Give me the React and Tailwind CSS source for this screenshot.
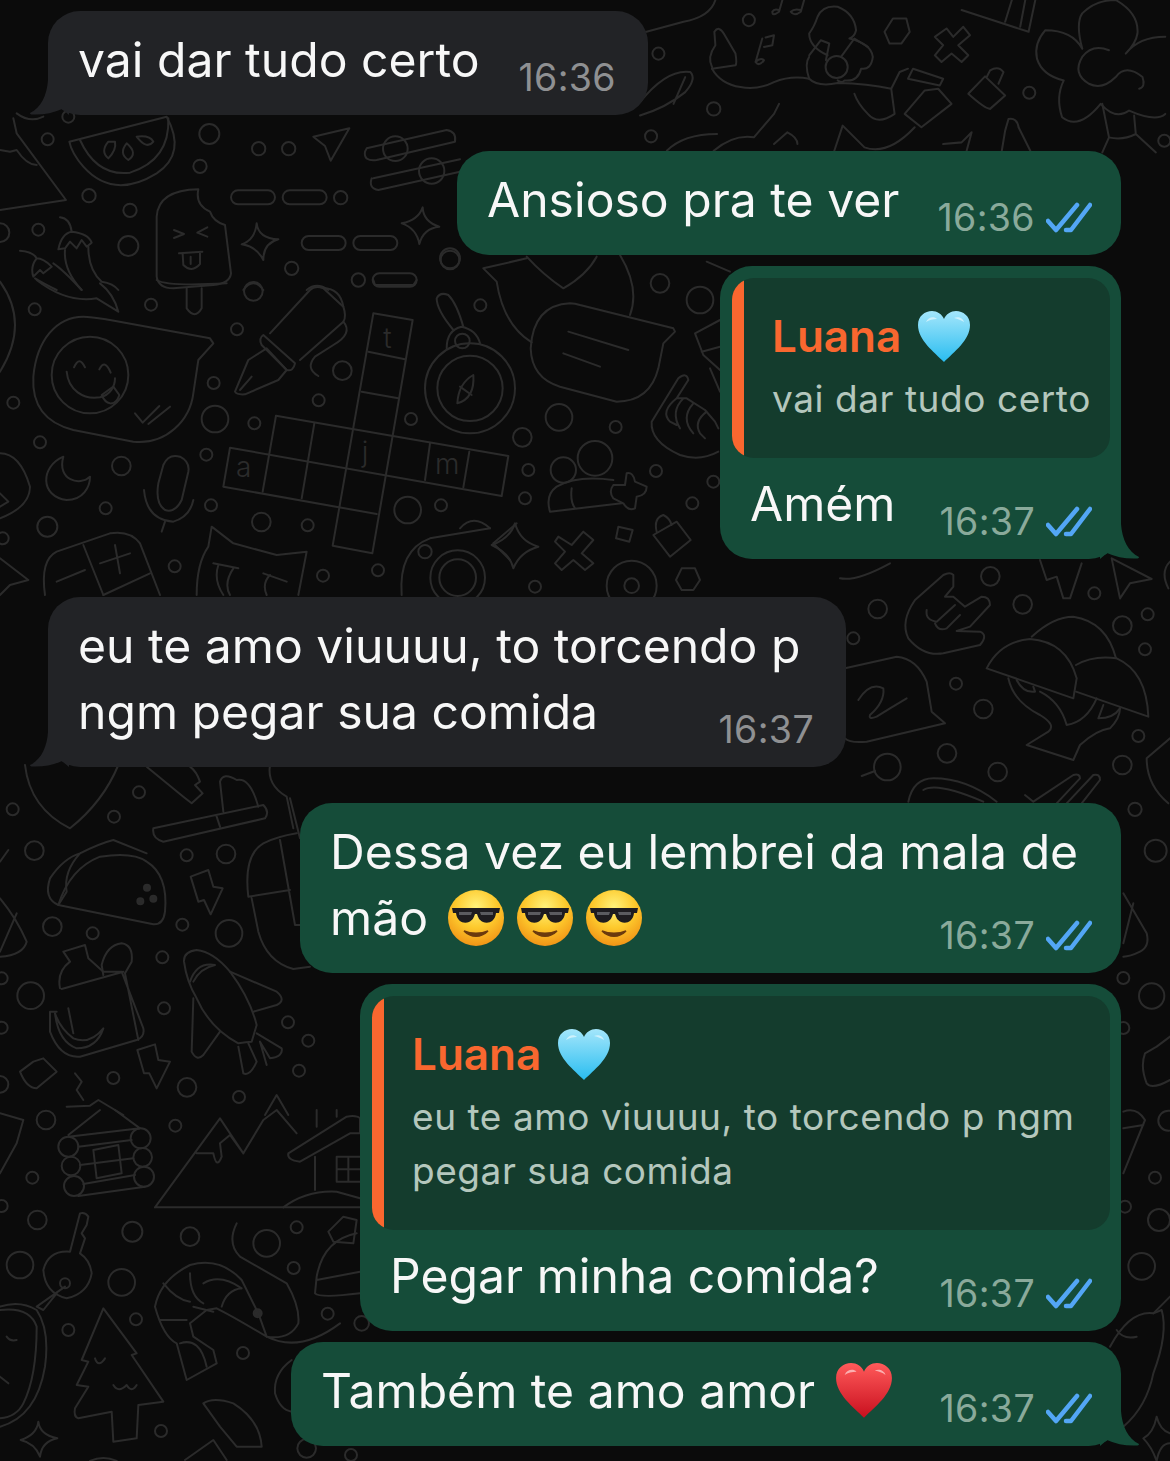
import { useId } from 'react'

const FONT = "font-['Inter','Liberation_Sans',sans-serif]"

// doodle wallpaper, traced in groups. coordinates are 3x page pixels, offset per group
const DOODLES = [
  {
    at: [0, 280],
    circles: [[104,88,18],[453,74,18],[760,34,28],[711,148,18],[1027,272,28],[641,309,18],[956,361,18],[40,368,18],[645,417,40],[763,430,18],[1233,417,18],[120,487,18],[619,524,18],[364,558,28],[633,676,18],[317,685,18],[142,740,30],[784,726,28],[923,736,18],[1223,690,40],[1323,676,18],[524,859,18],[969,887,18],[1134,871,18],[1441,76,18],[1275,815,20],[1373,893,82],[1373,893,55],[1410,325,135],[1410,325,98],[1387,183,22],[270,285,115],[8,775,18]],
    paths: [
      'M250 110 C170 110 110 180 100 290 C95 380 140 430 220 450 L400 485 C500 495 570 420 580 340 L595 240 L640 190 L630 175 L330 120 C300 115 275 110 250 110Z',
      'M200 275 C205 330 250 360 300 352 C330 345 345 320 345 295','M222 262 Q238 225 255 262','M298 268 Q315 235 332 278','M305 345 L340 320 L358 345 Q350 372 330 370 Q315 368 305 345Z','M405 400 L428 428 L478 378 M445 432 L510 380',
      'M705 335 L745 240 L800 205 L860 270 L835 300 L735 343 Q710 345 705 335Z','M790 165 L885 250 Q880 275 860 270 L785 195 Q775 175 790 165Z','M810 160 L930 30 Q945 15 970 25 L1030 80 Q1040 110 1030 125 L900 240','M970 25 Q1020 25 1030 80','M1030 125 Q1060 160 1000 195 L945 230 Q915 265 955 288','M720 330 L755 290',
      'M1120 100 L1238 120 L1117 820 L998 797Z','M828 407 L1525 528 L1505 648 L690 503 L670 620 L1130 702','M828 407 L788 635','M943 430 L905 655','M1290 490 L1275 600','M1408 515 L1390 622','M1105 215 L1215 238','M1085 335 L1195 355',
      'M1420 285 Q1375 310 1372 370 Q1425 355 1420 285Z','M1380 320 L1415 345','M1340 205 Q1340 150 1385 140 Q1430 150 1440 190','M1360 150 Q1310 90 1310 55 Q1320 35 1345 45 Q1370 70 1390 140',
      'M190 530 C120 560 120 650 200 660 C250 660 270 620 270 590 C240 620 170 600 190 530Z','M475 610 L490 555 Q505 520 540 530 Q570 545 565 575 L545 660 Q525 700 495 690 Q465 670 475 610Z','M432 630 Q440 720 520 725 Q570 710 580 660','M495 725 L485 755',
      'M135 945 Q120 840 170 815 L330 760 Q390 750 420 790 L480 945','M250 795 L310 945','M300 850 L390 820 M345 795 L360 880','M170 905 L255 870','M310 945 L450 880',
      'M590 945 Q590 850 625 800 L635 740 L700 790 L830 825 L920 815 L895 945','M640 850 L715 865 M790 880 L860 905 M655 855 Q640 900 670 945 M700 865 Q670 910 690 945 M810 885 Q785 910 800 945',
      'M0 520 Q60 520 90 620 Q90 680 0 715','M0 640 L25 665 L0 680','M0 5 Q90 130 0 275','M560 25 L560 85 Q585 120 605 85 L605 25','M1205 945 Q1195 810 1290 775 L1470 745','M1380 745 Q1420 700 1470 745','M0 835 L85 900 L30 915 L0 945',
      'M1480 790 L1550 730 M1480 790 L1530 840','M110 0 Q200 70 290 55 L355 95 Q340 40 300 10','M470 0 Q500 20 680 10','M1120 0 L1125 15 L1240 15 L1250 0',
    ],
    text: [['t',1150,205],['j',1085,545],['a',708,592],['m',1305,582]],
  },
  {
    at: [0, 110],
    circles: [[143,88,18],[205,20,18],[628,72,30],[776,116,20],[866,116,20],[600,169,20],[267,257,20],[390,301,20],[115,359,18],[385,408,30],[1022,263,20],[875,475,20],[1075,510,20],[1350,445,30],[0,368,28],[1186,116,37],[1295,183,38]],
    rects: [[693,241,132,42],[848,241,132,42],[905,378,132,42],[1060,378,132,42],[1118,490,132,40]],
    paths: [
      'M208 95 L500 20 Q560 130 470 190 Q340 270 250 170 Q215 130 208 95Z','M240 90 Q290 200 390 188 Q510 150 505 25','M325 95 Q300 125 325 145 Q350 120 345 95Z','M380 100 Q355 130 385 150 Q415 130 380 100Z','M410 80 Q440 120 460 95 Q450 75 410 80Z',
      'M940 80 L1048 55 L992 152 L975 108Z','M1100 115 L1340 60 Q1370 65 1365 95 L1130 150 Q1090 155 1095 125Z','M1120 205 L1380 148 M1380 185 L1135 240 Q1105 235 1115 205',
      'M470 500 L470 320 Q475 240 595 238 Q585 285 630 305 Q640 335 675 345 L693 490 Q690 520 640 525 L520 535 Q475 535 470 500Z','M522 360 L552 372 L522 384','M622 352 L592 368 L622 380','M537 430 L607 425 M548 432 L550 465 Q575 490 600 462 L600 428 M572 440 L572 462',
      'M770 340 Q775 385 835 388 Q790 400 790 450 Q770 410 725 403 Q765 390 770 340Z','M1268 292 Q1270 335 1318 350 Q1270 355 1258 402 Q1250 355 1205 340 Q1255 330 1268 292Z',
      'M180 322 Q210 325 215 365','M175 418 Q185 370 215 365 Q265 370 275 398 L260 410 L245 390 L230 415 L210 395 L195 415Z','M195 420 Q190 480 245 540','M265 410 Q265 480 305 515 Q340 520 355 540','M60 422 Q100 425 110 445 Q90 470 100 500 L120 480 L130 490 L155 470 Q130 445 110 445','M105 505 Q130 520 170 540 M160 460 Q190 480 245 540',
      'M0 300 L198 270 L50 70 L40 25','M0 120 L30 125 L50 120 Q80 165 110 165','M50 10 Q90 40 130 20','M730 540 Q760 500 790 540','M920 540 Q950 515 985 540',
    ],
  },
  {
    at: [640, 0],
    scale: 0.335,
    circles: [[325,60,18],[55,160,18],[220,325,20],[33,407,18],[1162,277,18],[1565,420,18],[587,200,33]],
    paths: [
      'M215 200 Q200 170 225 135 L222 95 Q235 75 250 100 L285 160 Q290 190 285 195 L215 205','M215 205 Q240 250 300 260 Q350 270 400 245 Q450 225 505 235','M560 165 Q505 140 505 100 Q520 80 530 50 Q545 15 590 20 Q640 40 645 90 Q640 110 625 115 Q690 130 695 170 Q690 210 660 205 Q650 245 610 240 Q605 250 590 240','M600 170 L640 115 L680 140','M505 165 L540 120 L565 130 L555 180 M505 235 Q490 190 505 170','M505 235 Q530 260 590 248 Q680 250 750 265 L775 215 L800 205 M750 265 L760 340 Q710 375 680 340 Q650 310 640 280',
      'M365 115 L345 185 Q355 200 370 180 Q360 170 345 185 M375 112 L400 105 L395 135 L370 140','M425 0 L415 35 Q395 50 395 35 Q400 25 415 30','M490 0 L480 35 Q460 50 450 35 Q460 25 480 30',
      'M755 55 L795 55 L805 95 L780 130 L745 130 L730 95Z','M880 110 L915 85 L935 110 L965 80 L985 105 L950 135 L980 165 L960 185 L930 160 L900 185 L880 165 L905 135Z','M980 280 L1030 228 L1090 285 L1045 325 Q1030 325 980 280Z M1035 230 L1045 210 Q1070 195 1085 215 L1070 250',
      'M1320 145 Q1290 90 1210 90 Q1175 130 1185 175 Q1200 225 1265 240 Q1240 290 1260 350 Q1310 390 1375 310 Q1420 360 1460 330 Q1540 365 1568 340','M1320 145 Q1300 70 1320 40 Q1360 0 1420 0 Q1490 40 1485 100 Q1480 130 1450 160 Q1490 110 1568 110','M1400 150 Q1350 130 1320 170 Q1290 220 1340 250 Q1380 270 1420 230 Q1450 190 1500 230 Q1510 260 1490 265','M1380 310 L1400 410 L1380 455 M1475 345 L1480 400 L1540 455 M1400 410 Q1440 420 1480 400',
      'M0 345 Q80 320 135 275 Q170 235 150 215 Q80 205 0 305 M135 230 L100 310','M225 0 Q210 50 130 65 L0 100','M960 30 L1160 95 L1180 0 M1090 65 L1110 0 M1135 80 L1150 0',
      'M790 340 L850 270 L890 265 L930 310 L840 380Z','M800 235 L815 205 L905 235 L895 255Z','M580 450 L605 375 L670 440 Q740 465 820 380','M400 430 L440 395 Q470 410 470 430','M80 450 Q130 400 230 400','M220 450 Q280 400 340 410 L400 340 L415 310','M1090 390 L1100 355 Q1125 350 1130 380 L1165 450 M1090 390 L1080 450','M905 430 L960 425 L990 395 L975 450',
    ],
  },
  {
    at: [840, 555],
    circles: [[451,64,28],[113,162,28],[40,250,18],[548,148,28],[763,115,18],[923,178,18],[847,212,28],[915,283,18],[348,386,18],[430,462,28],[895,543,18],[321,595,28],[473,651,28],[847,630,28],[142,636,40]],
    paths: [
      'M65 663 L105 648','M340 60 Q330 50 310 60 L225 135 Q180 200 205 250 Q250 305 310 295 L420 270 Q445 240 420 230 L350 228 L390 215 L450 150 Q450 125 425 125 L375 155 L340 125 L315 125 L340 95Z','M260 165 Q255 195 290 200 L345 150 M285 205 Q295 230 320 220 L360 180',
      'M15 340 L170 305 Q230 310 260 380 L275 470 L315 505 L80 560 Q30 565 15 550','M55 435 Q90 380 130 400 Q135 440 90 480 Q85 495 110 485 L150 460 L200 430',
      'M440 340 Q480 260 570 252 Q680 260 710 370 L700 430Z','M575 245 Q640 185 700 185 Q800 200 828 310','M708 330 Q760 300 830 310 Q920 350 925 485 L708 410','M505 370 Q520 440 600 480 Q650 510 625 530 L560 570 L700 615 L720 570 Q770 525 810 520 Q840 490 840 460','M530 375 Q550 415 585 410 L580 395','M600 410 Q660 440 680 510 Q740 500 770 430 M790 450 L775 490 Q820 490 840 460',
      'M555 720 L580 740 L700 660 Q720 655 720 670 L650 745 M680 745 L760 660 Q780 655 780 675 L725 745','M815 10 L935 72 L870 85 L840 130 Z','M600 15 L620 75 L650 65 L670 130 L690 130 L725 25','M205 740 Q220 670 280 670 Q380 670 470 740','M250 705 Q290 680 430 740','M990 550 L920 610 Q920 690 985 745','M0 70 Q50 80 150 25','M985 100 Q960 50 990 20',
    ],
  },
  {
    at: [0, 765],
    circles: [[38,133,18],[342,155,18],[417,82,18],[103,257,28],[560,271,18],[678,267,28],[157,485,28],[278,505,18],[547,479,18],[687,505,40],[487,577,18],[92,692,40],[492,730,18],[864,772,18],[897,917,18],[340,939,18],[561,967,28],[717,996,18],[5,640,18],[5,788,18],[0,958,25],[925,827,18]],
    dots: [[441,368,9],[460,401,9],[421,409,9]],
    paths: [
      'M75 0 Q90 130 210 190 Q310 110 355 0','M440 5 L550 95 L575 115 L608 85 L585 60 L600 50 Q590 20 570 5','M460 190 L790 120 Q810 140 795 160 L490 230 Q455 220 460 190Z M650 155 L660 185 M670 140 L660 50 Q670 20 710 45 Q750 35 775 125',
      'M175 420 L460 478 Q490 480 495 440 Q505 330 440 290 Q400 260 300 275 Q210 310 175 420Z','M175 420 Q130 400 150 340 Q190 280 240 265 Q300 235 340 225 L440 265 M240 265 Q190 320 200 380 L175 420',
      'M572 335 L625 315 L640 365 L668 370 L632 448 L612 405 L595 410Z','M412 855 L465 838 L475 885 L510 890 L470 970 L448 925 L432 925Z','M745 395 Q730 270 790 235 Q830 215 890 205 M745 395 L870 375 M755 400 L775 500 Q800 590 880 612 L930 605 M840 225 L885 480 L900 480 M870 100 L900 220','M810 0 Q800 60 860 95 L880 190',
      'M180 670 Q170 620 210 590 L190 560 L255 540 L265 580 L310 620 L365 620 L430 790 Q435 815 410 825 L240 875 Q180 880 150 800 L150 740 L170 740 M185 672 L370 620 M375 625 L415 825 M205 730 L220 805','M305 600 Q320 540 365 535 Q400 540 395 590 L375 625 M310 630 L305 600','M165 745 Q175 830 230 850 Q290 850 310 790 Q270 840 220 820 Q180 790 165 745',
      'M552 590 Q550 560 590 555 Q640 560 690 620 Q750 700 770 780 L755 830 Q740 830 715 835 Q630 790 590 700 Q560 650 552 590Z','M570 650 Q590 590 645 600 Q600 610 580 650','M690 620 L830 680 Q860 705 830 720 L760 740','M580 700 L575 860 Q590 890 610 870 L660 800','M715 845 L730 925 Q750 935 770 890 L745 835 M770 805 L845 850 Q850 875 810 880 L780 830 L800 900',
      'M0 400 Q50 460 80 530 Q70 570 0 575 M50 445 L0 560','M60 920 L100 890 L130 880 L170 920 L110 970 Q80 970 60 920Z','M225 925 L245 950 L230 975 L250 1005','M200 1025 L270 1022 L295 1005 L370 1050','M795 1050 L830 990 L865 1050','M0 290 L25 255',
    ],
  },
  {
    at: [0, 1110],
    circles: [[138,30,28],[526,47,18],[97,203,18],[112,330,28],[397,365,30],[570,380,28],[890,352,18],[800,400,40],[881,474,18],[60,465,40],[365,517,40],[408,628,18],[205,660,18],[983,611,18],[729,729,18],[483,963,18],[1053,1035,18],[920,1015,28],[5,288,18],[205,110,30],[213,168,28],[222,228,30],[422,85,30],[428,142,28],[432,200,30],[195,520,15],[1085,640,22]],
    dots: [[773,610,12]],
    paths: [
      'M205 80 L420 55 M235 110 L395 90 M240 165 L400 145 M250 222 L405 195 M235 258 L435 230 M205 75 L300 0 M345 0 L420 55','M280 120 L355 105 L365 190 L290 205Z','M465 292 L660 25 L730 130 L790 30 L830 0 L890 70 M465 292 L1080 292 M590 130 L640 130 Q650 180 665 140 L660 100 L690 75 L730 130','M865 130 L1040 20 Q1070 15 1080 25 L1080 70 L1050 70 L900 155 Q860 150 865 130Z M945 140 L945 240 M850 292 Q920 240 1010 245 L1080 265','M1010 140 L1080 140 M1010 140 L1010 215 L1080 215 M1045 140 L1045 215 M1010 178 L1080 178','M950 50 L950 0 M1010 0 L1010 20',
      'M240 310 L210 425 Q145 420 130 480 Q135 550 200 565 Q265 550 275 490 Q270 450 240 430 L255 385 L245 370 L260 345 L265 320 Q255 305 240 310Z','M195 530 L110 590 L130 600 L170 550','M0 590 Q60 570 110 600 Q150 660 135 770 Q110 920 0 950 M0 600 Q90 590 110 650 Q110 800 70 880 Q50 920 0 925','M20 680 Q30 695 50 690 M0 800 L25 820',
      'M310 595 L410 730 L395 735 L490 875 L415 885 L410 985 L340 995 L335 905 L235 925 Q220 920 225 895 L265 830 L230 825 L265 755 L245 750 Z','M285 745 Q295 775 315 745 M340 825 Q355 850 380 825 Q395 850 410 825','M115 935 Q120 975 172 985 Q125 995 120 1040 Q105 1000 62 990 Q110 975 115 935Z',
      'M775 610 L725 510 Q660 440 570 465 Q480 510 465 590 Q490 680 530 700 L560 810 L650 760 L640 720 L580 680 L570 640 L620 600 L650 595 Q700 620 800 680 L775 610Z','M480 630 L560 630 M490 520 Q530 570 570 575 M570 490 Q570 560 610 580 M610 520 Q660 490 725 535 M665 590 Q680 540 725 535 M540 700 Q600 680 620 770 M580 590 L640 605','M710 340 Q680 400 720 440 L860 520 Q900 590 895 640 Q870 690 800 680 M800 680 Q900 730 1020 640',
      'M1070 370 Q970 390 950 500 L945 550 Q960 565 1080 550 M950 510 L1080 485','M1030 320 L1070 330 L1060 400 L1000 395 L985 365Z','M610 880 Q640 860 700 880 Q780 930 785 1010 L710 1010 L660 950 L610 880Z M555 1050 L640 990 L680 1050','M875 750 Q820 790 825 850 Q840 900 875 905','M0 10 L70 30 L50 100 L0 190','M270 1053 Q310 1035 350 1053',
    ],
  },
  {
    at: [400, 255],
    circles: [[150,15,28],[780,85,28],[900,135,40],[477,487,40],[647,516,18],[367,547,28],[385,645,18],[768,648,18],[940,680,18],[375,730,18],[877,745,18],[405,995,18],[695,992,75],[695,992,22],[490,645,38],[585,610,52]],
    paths: [
      'M510 145 Q400 150 392 280 Q395 370 480 395 L650 440 Q750 440 775 340 L790 265 L825 230 L820 220 L540 150 Q525 145 510 145Z','M505 230 L685 285 M490 295 L600 335','M250 40 L380 10 M250 40 L290 80 Q310 210 395 262 M660 0 Q720 100 690 180','M380 5 Q430 60 490 100 Q560 60 590 5',
      'M955 590 Q900 620 840 600 Q750 560 755 500 L835 370 Q860 350 865 375 L830 430 L860 430 L915 465 L945 500 L955 520 M830 430 Q780 470 810 500 L830 510 M850 430 Q810 470 840 520 M880 445 Q840 490 880 535 M920 470 Q880 500 900 535 L915 550',
      'M450 770 Q435 720 470 695 Q530 660 640 675 M450 770 L665 745 M515 700 Q510 740 525 760','M640 690 L675 690 L680 655 Q700 650 705 680 L740 695 Q740 720 710 725 L705 760 Q685 770 670 745 L640 730 Q625 710 640 690Z',
      'M475 845 L515 870 L550 830 L580 855 L545 895 L580 925 L555 945 L520 915 L485 945 L465 925 L495 890 L465 860Z','M655 815 L698 825 L688 860 L648 850Z','M760 840 L830 800 L872 855 L810 905Z M770 830 Q760 790 790 780 Q810 790 815 810','M845 940 L885 940 L900 975 L880 1005 L845 1005 L828 975Z','M345 805 Q360 860 415 875 Q360 890 340 940 Q330 895 275 870 Q330 850 345 805Z','M885 235 L960 195 M885 235 L910 300 L960 345 M905 290 L960 275 M930 340 L960 410','M920 20 L990 50',
    ],
  },
  {
    at: [1110, 800],
    circles: [[75,28,20],[137,152,33],[40,534,18],[125,588,38],[135,1133,18],[147,1260,33],[95,1399,40],[175,962,30],[40,684,18],[45,1220,18]],
    paths: [
      'M40 280 L110 400 Q120 440 90 455 Q60 470 40 470 M70 310 L40 430','M140 740 L180 710 M140 740 L105 760 Q90 800 110 850 Q125 870 180 840','M40 935 Q80 920 105 960 L40 1120 M40 985 L100 975','M0 1640 Q60 1530 130 1540 L155 1530 Q175 1600 130 1720 Q110 1820 40 1880','M130 1540 L180 1490','M20 1590 Q40 1620 80 1610','M140 1850 Q150 1890 180 1900 M180 1930 Q150 1930 140 1983 Q125 1940 100 1915 Q130 1900 140 1850',
    ],
  },
]

function Wallpaper() {
  return (
    <svg className="absolute inset-0" width="1170" height="1461" viewBox="0 0 1170 1461" fill="none" stroke="#2b2b2b" strokeWidth="6" strokeLinecap="round" strokeLinejoin="round">
      {DOODLES.map(({ at, scale = 1 / 3, circles = [], rects = [], paths = [], dots = [], text = [] }, i) => (
        <g key={i} transform={`translate(${at[0]} ${at[1]}) scale(${scale})`}>
          {circles.map(([cx, cy, r], j) => <circle key={j} cx={cx} cy={cy} r={r} />)}
          {rects.map(([x, y, w, h], j) => <rect key={j} x={x} y={y} width={w} height={h} rx={h / 2} />)}
          {dots.map(([cx, cy, r], j) => <circle key={j} cx={cx} cy={cy} r={r} fill="#2b2b2b" />)}
          {paths.map((d, j) => <path key={j} d={d} />)}
          {text.map(([t, x, y], j) => (
            <text key={j} x={x} y={y} fill="#2b2b2b" stroke="none" fontSize="84" fontFamily="Inter, sans-serif" fontWeight="300">{t}</text>
          ))}
        </g>
      ))}
    </svg>
  )
}

function Ticks() {
  return (
    <svg width="46" height="32" viewBox="0 0 46 32" fill="none" stroke="#53a6f5" strokeWidth="4.5" strokeLinecap="round" strokeLinejoin="round" className="ml-[11px] mb-[4px] shrink-0">
      <path d="M2 19 L10 28 L31 3" />
      <path d="M20 28 L25 28 L44 3" />
    </svg>
  )
}

function Heart({ from, to, size = 54 }) {
  const id = useId()
  return (
    <svg width={size} height={size} viewBox="0 0 54 54" className="shrink-0">
      <defs>
        <linearGradient id={id} x1="0" y1="0" x2="0" y2="1">
          <stop offset="0" stopColor={from} />
          <stop offset="1" stopColor={to} />
        </linearGradient>
      </defs>
      <path d="M27 52 C17 42 1 30 1 15 C1 6 8 1 15 1 C20 1 25 4 27 9 C29 4 34 1 39 1 C46 1 53 6 53 15 C53 30 37 42 27 52Z" fill={`url(#${id})`} />
      <path d="M9 12 C11 7 17 6 20 9 C16 9 12 10 9 12Z M37 8 C41 6 46 8 47 12 C44 10 41 9 37 8Z" fill="#ffffff" opacity="0.55" />
    </svg>
  )
}

function CoolFace() {
  const id = useId()
  return (
    <svg width="58" height="58" viewBox="0 0 58 58" className="shrink-0">
      <defs>
        <radialGradient id={id} cx="0.5" cy="0.3" r="0.75">
          <stop offset="0" stopColor="#fff27a" />
          <stop offset="0.5" stopColor="#fdc92c" />
          <stop offset="1" stopColor="#ef8c13" />
        </radialGradient>
      </defs>
      <circle cx="29" cy="29" r="28" fill={`url(#${id})`} />
      <path d="M5 19 L53 19 L52 24 L49 24 C48 33 41 35 36 33 C32 31 31 28 30 25 L28 25 C27 28 26 31 22 33 C17 35 10 33 9 24 L6 24Z" fill="#1e1c20" />
      <path d="M12 23 L25 23 L24 26 L12 26Z M33 23 L46 23 L46 26 L34 26Z" fill="#5b5b60" />
      <path d="M17 42 C24 49 34 49 41 42 C34 45 24 45 17 42Z" fill="#6b3a0e" stroke="#6b3a0e" strokeWidth="1.5" />
    </svg>
  )
}

function Tail({ side, fill }) {
  return (
    <svg width="40" height="35" viewBox="0 0 40 35" className={side === 'left' ? 'absolute left-[-19px] bottom-0 -scale-x-100' : 'absolute right-[-19px] bottom-0'}>
      <path d="M21 0 C22 15 28 28 39 33 Q39 34.5 36 34.5 Q20 35 7 29 L0 35 L0 0Z" fill={fill} />
    </svg>
  )
}

function Time({ value, me }) {
  return (
    <div className="flex items-end shrink-0 mb-[-5px]">
      <span className={`text-[37.5px] leading-[40px] tracking-[0.01em] ${me ? 'text-[#8aaa9b]' : 'text-[#8f9092]'}`}>{value}</span>
      {me && <Ticks />}
    </div>
  )
}

function Quote({ lines }) {
  return (
    <div className="flex rounded-[22px] overflow-hidden bg-[#143c2d]">
      <div className="w-[12px] shrink-0 bg-[#f9672f]" />
      <div className="pl-[28px] pt-[31px] pb-[32px]">
        <div className="flex items-center h-[54px] gap-[16px] text-[44px] font-semibold text-[#f9672f]">
          Luana
          <div className="mt-[2px]"><Heart from="#a4e6fb" to="#29bdf0" /></div>
        </div>
        <div className="mt-[9px] text-[37px] leading-[54px] tracking-[0.015em] text-[#b4c7bd] whitespace-nowrap">
          {lines.map(l => <div key={l}>{l}</div>)}
        </div>
      </div>
    </div>
  )
}

function Bubble({ me, tail, time, lines, quote, width, children }) {
  const fill = me ? '#154c39' : '#222326'
  return (
    <div className={`relative rounded-[32px] ${width} ${me ? 'self-end bg-[#154c39]' : 'self-start bg-[#222326]'} ${quote ? 'pt-[12px]' : 'pt-[16px]'} pb-[22px]`}>
      {quote && <div className="pl-[12px] pr-[11px] mb-[13px]">{quote}</div>}
      <div className={`pl-[30px] ${me ? 'pr-[29px]' : 'pr-[32px]'} text-[48.1px] leading-[66px] text-[#f7f7f7] whitespace-nowrap`}>
        {lines.slice(0, -1).map(l => <div key={l}>{l}</div>)}
        <div className="flex justify-between items-end">
          <div className="flex items-center">{lines[lines.length - 1]}{children}</div>
          <Time value={time} me={me} />
        </div>
      </div>
      {tail && <Tail side={me ? 'right' : 'left'} fill={fill} />}
    </div>
  )
}

export default function App() {
  return (
    <div className={`relative w-[1170px] h-[1461px] overflow-hidden bg-[#0b0b0b] ${FONT}`}>
      <Wallpaper />
      <div className="relative flex flex-col pt-[11px] pl-[48px] pr-[49px]">
        <Bubble tail time="16:36" lines={['vai dar tudo certo']} width="w-[600px]" />

        <div className="mt-[36px] flex flex-col gap-[11px]">
          <Bubble me time="16:36" lines={['Ansioso pra te ver']} width="w-[664px]" />
          <Bubble me tail time="16:37" lines={['Amém']} width="w-[401px]" quote={<Quote lines={['vai dar tudo certo']} />} />
        </div>

        <div className="mt-[38px]">
          <Bubble tail time="16:37" lines={['eu te amo viuuuu, to torcendo p', 'ngm pegar sua comida']} width="w-[798px]" />
        </div>

        <div className="mt-[36px] flex flex-col gap-[11px]">
          <Bubble me time="16:37" lines={['Dessa vez eu lembrei da mala de', 'mão']} width="w-[821px]">
            <div className="flex gap-[11px] ml-[19px]">
              <CoolFace /><CoolFace /><CoolFace />
            </div>
          </Bubble>
          <Bubble me time="16:37" lines={['Pegar minha comida?']} width="w-[761px]" quote={<Quote lines={['eu te amo viuuuu, to torcendo p ngm', 'pegar sua comida']} />} />
          <Bubble me tail time="16:37" lines={['Também te amo amor']} width="w-[830px]">
            <div className="ml-[20px]">
              <Heart from="#ff5a5a" to="#c80f1e" size={58} />
            </div>
          </Bubble>
        </div>
      </div>
    </div>
  )
}
